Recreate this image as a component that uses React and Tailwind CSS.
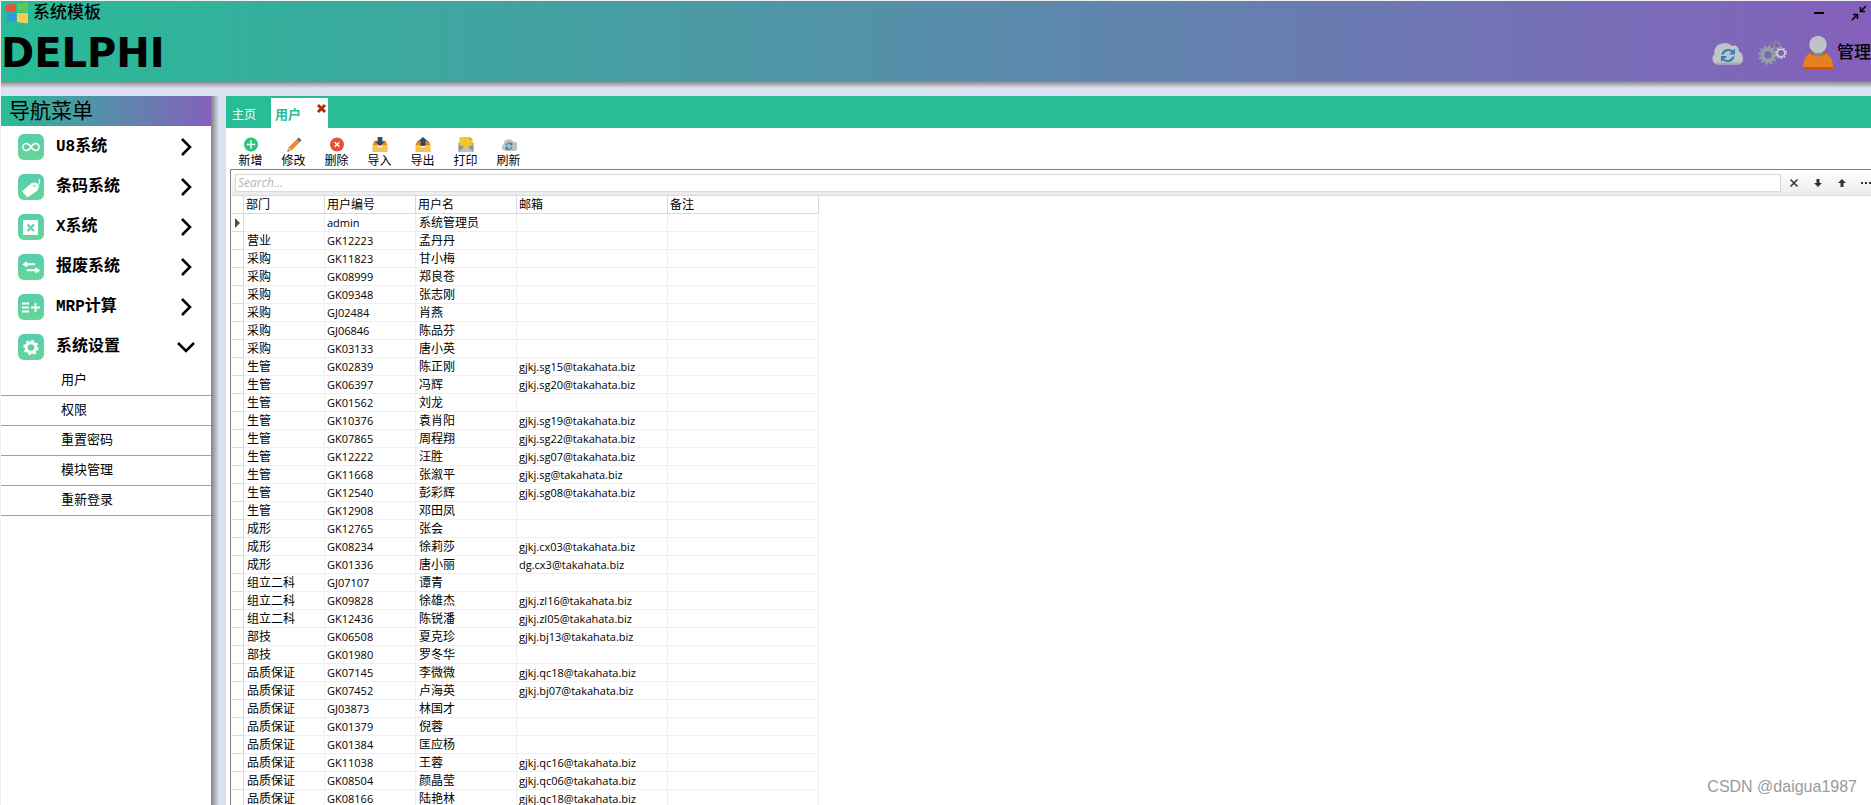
import { useState } from "react";

const rows = [
  ["", "admin", "系统管理员", ""],
  ["营业", "GK12223", "孟丹丹", ""],
  ["采购", "GK11823", "甘小梅", ""],
  ["采购", "GK08999", "郑良苍", ""],
  ["采购", "GK09348", "张志刚", ""],
  ["采购", "GJ02484", "肖燕", ""],
  ["采购", "GJ06846", "陈品芬", ""],
  ["采购", "GK03133", "唐小英", ""],
  ["生管", "GK02839", "陈正刚", "gjkj.sg15@takahata.biz"],
  ["生管", "GK06397", "冯辉", "gjkj.sg20@takahata.biz"],
  ["生管", "GK01562", "刘龙", ""],
  ["生管", "GK10376", "袁肖阳", "gjkj.sg19@takahata.biz"],
  ["生管", "GK07865", "周程翔", "gjkj.sg22@takahata.biz"],
  ["生管", "GK12222", "汪胜", "gjkj.sg07@takahata.biz"],
  ["生管", "GK11668", "张溆平", "gjkj.sg@takahata.biz"],
  ["生管", "GK12540", "彭彩辉", "gjkj.sg08@takahata.biz"],
  ["生管", "GK12908", "邓田凤", ""],
  ["成形", "GK12765", "张会", ""],
  ["成形", "GK08234", "徐莉莎", "gjkj.cx03@takahata.biz"],
  ["成形", "GK01336", "唐小丽", "dg.cx3@takahata.biz"],
  ["组立二科", "GJ07107", "谭青", ""],
  ["组立二科", "GK09828", "徐雄杰", "gjkj.zl16@takahata.biz"],
  ["组立二科", "GK12436", "陈锐潘", "gjkj.zl05@takahata.biz"],
  ["部技", "GK06508", "夏克珍", "gjkj.bj13@takahata.biz"],
  ["部技", "GK01980", "罗冬华", ""],
  ["品质保证", "GK07145", "李微微", "gjkj.qc18@takahata.biz"],
  ["品质保证", "GK07452", "卢海英", "gjkj.bj07@takahata.biz"],
  ["品质保证", "GJ03873", "林国才", ""],
  ["品质保证", "GK01379", "倪蓉", ""],
  ["品质保证", "GK01384", "匡应杨", ""],
  ["品质保证", "GK11038", "王蓉", "gjkj.qc16@takahata.biz"],
  ["品质保证", "GK08504", "颜晶莹", "gjkj.qc06@takahata.biz"],
  ["品质保证", "GK08166", "陆艳林", "gjkj.qc18@takahata.biz"],
];

const menu = [
  { label: "U8系统", icon: "infinity" },
  { label: "条码系统", icon: "tag" },
  { label: "X系统", icon: "box" },
  { label: "报废系统", icon: "swap" },
  { label: "MRP计算", icon: "plan" },
  { label: "系统设置", icon: "gear", open: true },
];

const subMenu = ["用户", "权限", "重置密码", "模块管理", "重新登录"];

const tools = [
  { label: "新增", icon: "add" },
  { label: "修改", icon: "edit" },
  { label: "删除", icon: "remove" },
  { label: "导入", icon: "import" },
  { label: "导出", icon: "export" },
  { label: "打印", icon: "print" },
  { label: "刷新", icon: "refresh" },
];

const menuGlyphs = {
  infinity: (
    <path
      d="M13 13c-1.500-2.200-2.700-3.400-4.700-3.400a3.400 3.400 0 0 0 0 6.800c2 0 3.200-1.200 4.700-3.400s2.700-3.400 4.700-3.400a3.400 3.400 0 0 1 0 6.800c-2 0-3.200-1.200-4.700-3.400z"
      fill="none"
      stroke="#fff"
      strokeWidth="1.500"
    />
  ),
  tag: (
    <>
      <path
        d="M4.500 17.500 13.500 9.500l4.500-.5 2.500 3.500-1.500 4-9.500 6.500z"
        fill="#fff"
        stroke="#fff"
        strokeLinejoin="round"
      />
      <circle cx="16.500" cy="12" r="1.300" fill="#5cd1a6" />
      <path d="M16.500 12c3.500.5 5.500-2.500 5-7" fill="none" stroke="#fff" strokeWidth="1.300" />
    </>
  ),
  box: (
    <>
      <rect x="5" y="6" width="15" height="15" rx="1" fill="#fff" />
      <path d="m9.500 10.500 6.500 6.500m0-6.500-6.500 6.500" stroke="#5cd1a6" strokeWidth="2.200" />
    </>
  ),
  swap: (
    <path
      d="M17 9.500H9V7.500L4.500 10.500 9 13v-2h8zM9 15.500h8.500v-2L22 16.500 17.500 19v-2H9z"
      fill="#fff"
      stroke="#fff"
      strokeWidth=".5"
    />
  ),
  plan: <path d="M4 9.500h7M4 13.500h7M4 17.500h7M13 13.500h9M17.500 9v9" stroke="#fff" strokeWidth="1.800" />,
  gear: (
    <>
      <circle cx="13" cy="13.500" r="4.800" fill="none" stroke="#fff" strokeWidth="3" />
      <circle cx="13" cy="13.500" r="6.800" fill="none" stroke="#fff" strokeWidth="1.800" strokeDasharray="2.700 2.640" />
    </>
  ),
};

const toolGlyphs = {
  add: (
    <>
      <circle cx="8" cy="9" r="7.400" fill="#24c777" />
      <path d="M8 4.500v9M3.500 9h9" stroke="#fff" strokeWidth="1.500" />
    </>
  ),
  edit: (
    <>
      <path d="M1 16.500 2.500 12 11 3.500l3 3L5.500 15z" fill="#ee7d22" />
      <path d="m4 13.500 8.500-8.500" stroke="#f7a350" strokeWidth="1" />
      <path d="m11 3.500 2-2 3 3-2 2z" fill="#5c666d" />
      <path d="M1 16.500 2.500 12 5.500 15z" fill="#f4c890" />
      <path d="m1 16.500.7-2 1.300 1.300z" fill="#333" />
    </>
  ),
  remove: (
    <>
      <circle cx="8" cy="9" r="7.400" fill="#e7503b" />
      <path d="m5.500 6.500 5 5m0-5-5 5" stroke="#fff" strokeWidth="1.500" />
    </>
  ),
  import: (
    <>
      <path d="M2 5h12l2 5H0z" fill="#e58224" />
      <path d="M0 10h5l1 2h4l1-2h5v7H0z" fill="#f2c54b" />
      <path d="M5.500 1h5v5H13L8 10.500 3 6h2.500z" fill="#34495e" />
    </>
  ),
  export: (
    <>
      <path d="M2 5h12l2 5H0z" fill="#e58224" />
      <path d="M0 10h5l1 2h4l1-2h5v7H0z" fill="#f2c54b" />
      <path d="M5.500 10.500h5v-5H13L8 1 3 5.500h2.500z" fill="#34495e" />
    </>
  ),
  print: (
    <>
      <path d="M0 7h16v10H0z" fill="#8b999b" />
      <path d="m0 17 8-7 8 7z" fill="#bdc5c8" />
      <path d="M1 1h11l3 3v5l-7 4-7-4z" fill="#f3c62e" />
      <path d="M12 1v3h3z" fill="#e38b23" />
    </>
  ),
  refresh: (
    <>
      <path d="M4 16a4 4 0 0 1-1.500-7.500 5.500 5.500 0 0 1 10-2.500 4.500 4.500 0 0 1 1 10z" fill="#bbc1c5" />
      <path d="M5 10a3.500 3 0 0 1 6-1.500M11 12a3.500 3 0 0 1-6 1" fill="none" stroke="#2e80b8" strokeWidth="1.300" />
      <path d="M11.500 6.500V10H8.500zM4.500 15v-3.500h3z" fill="#2e80b8" />
    </>
  ),
};

function CloudIcon() {
  return (
    <svg className="h-6 w-8" viewBox="0 0 32 24" aria-hidden="true">
      <path d="M6 23.500a6 6 0 0 1-3.500-10.500A8.500 8.500 0 0 1 11 2.500a9 9 0 0 1 9 2.500c4-1.500 7 1 6.800 5 3.500 2 4.200 5 4.200 8a5.500 5.500 0 0 1-5 5.500z" fill="#bfc4c8" />
      <path d="M3 21.500c1 1.500 2 2 3 2h20c1.500 0 3-.5 4-2z" fill="#a5acb0" />
      <path d="M10.500 13.500a6 5.500 0 0 1 10-3M21.500 15.500a6 5.500 0 0 1-10 3" fill="none" stroke="#2e80b8" strokeWidth="2" />
      <path d="M23 7.500v6h-6zM9 21v-6h6z" fill="#2e80b8" />
    </svg>
  );
}

function GearsIcon() {
  return (
    <svg className="h-7 w-8" viewBox="0 0 32 28" fill="none" aria-hidden="true">
      <circle cx="12" cy="16" r="5.700" stroke="#95a0a4" strokeWidth="4" />
      <circle cx="12" cy="16" r="8.500" stroke="#95a0a4" strokeWidth="2.400" strokeDasharray="2.300 2.150" />
      <circle cx="21" cy="6" r="2.800" stroke="#7f8c8d" strokeWidth="1.500" />
      <circle cx="21" cy="6" r="4" stroke="#7f8c8d" strokeWidth="1.300" strokeDasharray="1.500 1.640" />
      <circle cx="25" cy="14" r="3.800" stroke="#cfd4d8" strokeWidth="1.500" />
      <circle cx="25" cy="14" r="5.200" stroke="#cfd4d8" strokeWidth="1.400" strokeDasharray="1.700 1.570" />
    </svg>
  );
}

function UserIcon() {
  return (
    <svg className="h-9 w-8" viewBox="0 0 32 36" aria-hidden="true">
      <path d="M1 32c0-8 4-13 9-15h12c5 2 9 7 9 15v1.500H1z" fill="#e67e22" />
      <path d="M1 32h30v1.500q0 1-1.500 1h-27Q1 34.500 1 33z" fill="#d35400" />
      <path d="M8 18c2 4 14 4 16 0l-2-1H10z" fill="#d35400" />
      <path d="M10 17h12l-2 3q-4 3-8 0z" fill="#7f8c8d" />
      <circle cx="16" cy="9.500" r="8.700" fill="#bdc3c7" />
    </svg>
  );
}

function Header() {
  return (
    <header className="h-20 shrink-0 overflow-hidden bg-linear-to-r/srgb from-[#28bc97] to-[#8560bc]">
      <div className="flex h-7 items-start justify-between">
        <div className="flex items-center gap-1 pl-1">
          <svg className="h-6 w-6" viewBox="0 0 24 24" aria-hidden="true">
            <path d="M1 4q5-1.500 10-.5V11H1z" fill="#e8543f" />
            <path d="M12 3q5 0 11-2v10H12z" fill="#63c554" />
            <path d="M2 12h9v8q-4-.5-9 0z" fill="#2b9be6" />
            <path d="M12 12h11v10q-5 .5-11-1z" fill="#f5cc50" />
          </svg>
          <h1 className="text-[17px] leading-6 font-medium">系统模板</h1>
        </div>
        <div className="flex items-center gap-[22px] pr-1">
          <button type="button" aria-label="最小化" className="flex h-6 w-5 items-center justify-center">
            <span className="h-0.5 w-2.5 bg-black" />
          </button>
          <button type="button" aria-label="还原" className="flex h-6 w-4 items-center">
            <svg className="h-4 w-4" viewBox="0 0 16 16" fill="none" stroke="#000" strokeWidth="1.500" aria-hidden="true">
              <path d="M15 1 10 6M9.500 2v4.500H14M1 15l5-5M2 9.500h4.500V14" />
            </svg>
          </button>
        </div>
      </div>
      <div className="flex h-12 items-center justify-between">
        <span className="font-['DejaVu_Sans'] text-[40px] leading-12 font-bold">DELPHI</span>
        <div className="flex items-center">
          <button type="button" aria-label="同步" className="mr-3">
            <CloudIcon />
          </button>
          <button type="button" aria-label="设置" className="mr-3.5">
            <GearsIcon />
          </button>
          <button type="button" className="flex items-center gap-[3px] text-[17px] font-medium">
            <UserIcon />
            管理
          </button>
        </div>
      </div>
    </header>
  );
}

function Sidebar() {
  return (
    <nav className="w-[210px] shrink-0 bg-white">
      <h2 className="h-[30px] bg-linear-to-r/srgb from-[#28bc97] to-[#8560bc] pl-2 text-[21px] leading-[30px]">
        导航菜单
      </h2>
      <ul>
        {menu.map((item) => (
          <li key={item.label}>
            <button
              type="button"
              aria-expanded={!!item.open}
              className="flex h-10 w-full items-center pt-px pr-4 pl-[17px] font-['Liberation_Mono','Noto_Sans_CJK_SC',monospace] text-base font-bold"
            >
              <svg
                className="mr-3 h-[26px] w-[26px] rounded-md bg-linear-to-b from-[#55ceb0] to-[#66d595]"
                viewBox="0 0 26 26"
                aria-hidden="true"
              >
                {menuGlyphs[item.icon]}
              </svg>
              <span className="flex-1 text-left">{item.label}</span>
              <svg
                className="h-[18px] w-[18px]"
                viewBox="0 0 18 18"
                fill="none"
                stroke="#000"
                strokeWidth="2.500"
                aria-hidden="true"
              >
                <path d={item.open ? "m1 5 8 8 8-8" : "m5 1 8 8-8 8"} />
              </svg>
            </button>
          </li>
        ))}
      </ul>
      <ul>
        {subMenu.map((label) => (
          <li key={label} className="h-[30px] border-b border-[#a0a0a0]">
            <a href="#" className="block pl-[60px] text-[13px] leading-7">
              {label}
            </a>
          </li>
        ))}
      </ul>
    </nav>
  );
}

function Tabs() {
  return (
    <div className="flex h-8 items-end bg-[#28bc97]">
      <button type="button" className="h-[30px] w-[45px] pt-1 pl-1.5 text-left text-xs text-white">
        主页
      </button>
      <div className="flex h-[30px] w-[57px] justify-between bg-white pr-px pl-1">
        <button type="button" className="pt-1 text-[13px] font-bold text-[#28bc97]">
          用户
        </button>
        <button type="button" aria-label="关闭" className="h-4">
          <svg className="mt-1 h-[11px] w-[11px]" viewBox="0 0 11 11" aria-hidden="true">
            <path d="m2 2 7 7M9 2 2 9" stroke="#b32c10" strokeWidth="3" />
          </svg>
        </button>
      </div>
    </div>
  );
}

function Toolbar() {
  return (
    <div className="flex h-[41px] pt-2 pl-[3px]">
      {tools.map((tool) => (
        <button key={tool.label} type="button" className="flex w-[43px] flex-col items-center text-xs leading-[17px]">
          <svg className="h-[17px] w-4 shrink-0" viewBox="0 0 16 18" aria-hidden="true">
            {toolGlyphs[tool.icon]}
          </svg>
          {tool.label}
        </button>
      ))}
    </div>
  );
}

function SearchBar() {
  const [query, setQuery] = useState("");

  return (
    <div className="flex h-[26px] items-center border-b border-[#dadada] bg-linear-to-b from-white to-[#ececec] pl-[3px]">
      <input
        type="text"
        aria-label="Search"
        placeholder="Search..."
        value={query}
        onChange={(e) => setQuery(e.target.value)}
        className="mr-px h-[18px] min-w-0 flex-1 border border-[#dadada] bg-white px-0.5 font-['Open_Sans',sans-serif] text-xs placeholder:text-[#b4b4b4] placeholder:italic"
      />
      <button type="button" aria-label="清除" className="flex w-6 justify-center">
        <svg className="h-2.5 w-2.5" viewBox="0 0 10 10" stroke="#333" strokeWidth="1.500" aria-hidden="true">
          <path d="m1.500 1.500 7 7m0-7-7 7" />
        </svg>
      </button>
      <button type="button" aria-label="下一个" className="flex w-6 justify-center">
        <svg className="h-2.5 w-2.5" viewBox="0 0 10 10" fill="#333" aria-hidden="true">
          <path d="M3.500 1h3v4H9L5 9 1 5h2.500z" />
        </svg>
      </button>
      <button type="button" aria-label="上一个" className="flex w-6 justify-center">
        <svg className="h-2.5 w-2.5" viewBox="0 0 10 10" fill="#333" aria-hidden="true">
          <path d="M3.500 9h3V5H9L5 1 1 5h2.500z" />
        </svg>
      </button>
      <button type="button" aria-label="更多" className="flex w-[17px] justify-end">
        <svg className="h-2.5 w-2.5" viewBox="0 0 10 10" fill="#333" aria-hidden="true">
          <path d="M0 4h2v2H0zM4 4h2v2H4zM8 4h2v2H8z" />
        </svg>
      </button>
    </div>
  );
}

function UserTable() {
  return (
    <table className="w-[587px] table-fixed border-separate border-spacing-0 text-xs leading-[15px]">
      <colgroup>
        <col className="w-3" />
        <col className="w-[81px]" />
        <col className="w-[91px]" />
        <col className="w-[101px]" />
        <col className="w-[151px]" />
        <col className="w-[151px]" />
      </colgroup>
      <thead>
        <tr>
          {["", "部门", "用户编号", "用户名", "邮箱", "备注"].map((title) => (
            <th
              key={title}
              className="h-[18px] border-r border-b border-[#dadada] p-0 pt-0.5 pl-0.5 text-left font-normal"
            >
              {title}
            </th>
          ))}
        </tr>
      </thead>
      <tbody>
        {rows.map(([dept, code, name, email], index) => (
          <tr key={code}>
            <td className="h-[18px] border-r border-b border-[#dadada] p-0 pl-[3px]">
              {index === 0 && (
                <svg className="h-2.5 w-[5px]" viewBox="0 0 5 10" aria-hidden="true">
                  <path d="M0 0v10l5-5z" fill="#505050" />
                </svg>
              )}
            </td>
            <td className="border-r border-b border-[#efefef] p-0 pt-0.5 pl-[3px]">{dept}</td>
            <td className="border-r border-b border-[#efefef] p-0 pl-0.5 font-['Open_Sans',sans-serif] text-[11px]">
              {code}
            </td>
            <td className="border-r border-b border-[#efefef] p-0 pt-0.5 pl-[3px]">{name}</td>
            <td className="border-r border-b border-[#efefef] p-0 pl-0.5 font-['Open_Sans',sans-serif] text-[11px]">
              {email}
            </td>
            <td className="border-r border-b border-[#efefef] p-0" />
          </tr>
        ))}
      </tbody>
    </table>
  );
}

export default function App() {
  return (
    <div className="relative flex h-screen flex-col overflow-hidden border-t border-l border-[#f0f0f0] bg-[#dbe1f1] font-['Liberation_Sans','Noto_Sans_CJK_SC',sans-serif] text-black">
      <Header />
      <div className="mb-2 h-[7px] shrink-0 bg-linear-to-b/srgb from-[#808080] to-[#dbe1f1]" />
      <div className="flex min-h-0 flex-1">
        <Sidebar />
        <div className="mr-[7px] w-2 shrink-0 bg-linear-to-r/srgb from-[#808080] to-[#dbe1f1]" />
        <main className="flex min-w-0 flex-1 flex-col bg-white">
          <Tabs />
          <Toolbar />
          <section className="ml-1 min-h-0 flex-1 overflow-hidden border-t border-l border-[#808080] pl-px">
            <SearchBar />
            <UserTable />
          </section>
        </main>
      </div>
      <p className="absolute right-3.5 bottom-1.5 text-base leading-6 text-[#9a9a9a]">CSDN @daigua1987</p>
    </div>
  );
}
